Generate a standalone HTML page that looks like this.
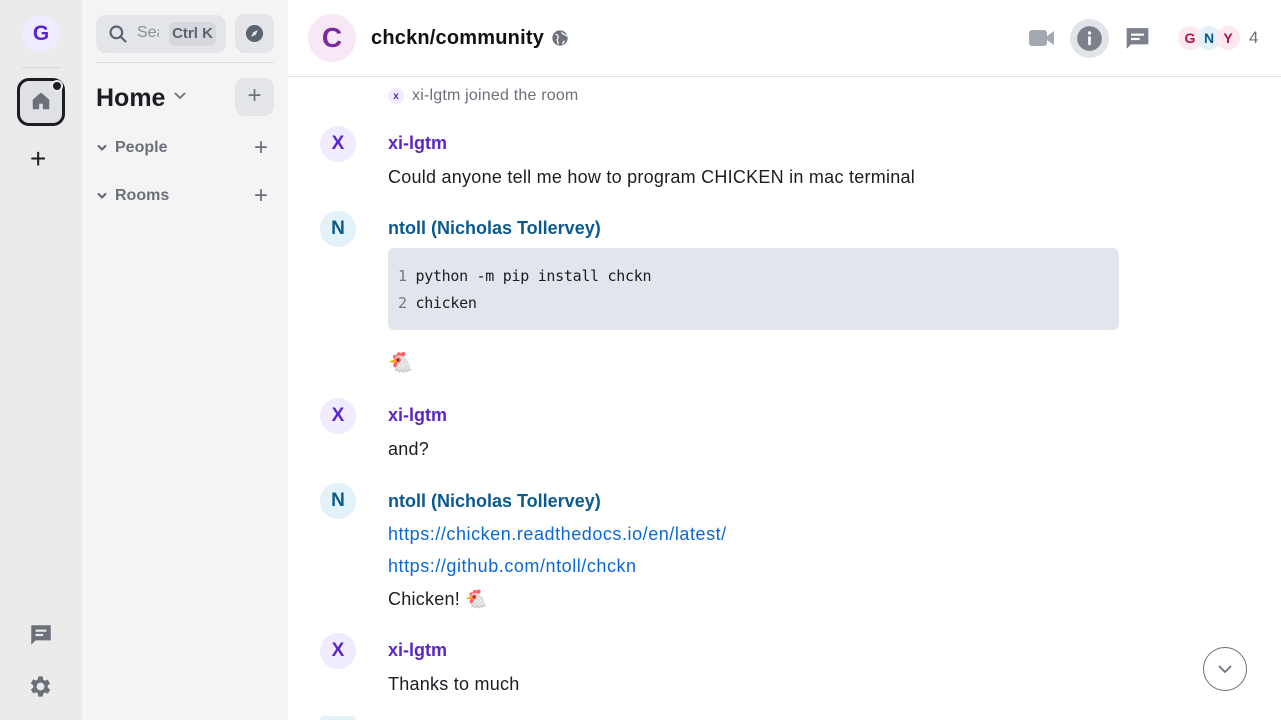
<!DOCTYPE html>
<html style="overflow:hidden;width:1281px;height:720px"><head><meta charset="utf-8"><style>
*{box-sizing:border-box;margin:0;padding:0}
body{width:1281px;height:720px;overflow:hidden;font-family:"Liberation Sans",sans-serif;background:#fff;position:relative;color:#1b1d22}
.abs{position:absolute}
.rail{left:0;top:0;width:82px;height:720px;background:#ebebeb}
.side{left:82px;top:0;width:206px;height:720px;background:#f4f4f4}
.av{position:absolute;border-radius:50%;display:flex;align-items:center;justify-content:center;font-weight:bold}
.name{position:absolute;left:388px;font-size:18px;font-weight:bold}
.msg{position:absolute;left:388px;font-size:18px;color:#1b1d22;letter-spacing:0.25px;white-space:nowrap}
.px{color:#5b26c8}.nx{color:#0b5a8f}
a{color:#0a68d6;text-decoration:none;letter-spacing:0.55px}
</style></head><body>
<div class="abs rail"></div>
<div class="abs side"></div>
<div class="av" style="left:22px;top:15px;width:38px;height:38px;background:#f0ebff;color:#5b26c8;font-size:21px">G</div>
<div class="abs" style="left:22px;top:67px;width:38px;height:1px;background:#d8d8dc"></div>
<div class="abs" style="left:17px;top:78px;width:48px;height:48px;border:3px solid #1b1d22;border-radius:12px;background:#e0e1e5"></div>
<svg class="abs" style="left:30px;top:90px" width="22" height="22" viewBox="0 0 24 24"><path d="M4 11 L12 4 L20 11 V20 H15 V14 H9 V20 H4Z" fill="#6b7079" stroke="#6b7079" stroke-linejoin="round" stroke-width="2"/></svg>
<div class="abs" style="left:51px;top:80px;width:12px;height:12px;border-radius:50%;background:#1b1d22;border:2px solid #ebebeb"></div>
<div class="abs" style="left:30px;top:145px;font-size:28px;line-height:28px;color:#1b1d22">+</div>
<svg class="abs" style="left:28px;top:622px" width="26" height="26" viewBox="0 0 24 24"><path d="M3 3h18v14H7l-4 4z" fill="#6b7079"/><rect x="7" y="7" width="10" height="2" fill="#ebebeb"/><rect x="7" y="11" width="7" height="2" fill="#ebebeb"/></svg>
<svg class="abs" style="left:27px;top:673px" width="27" height="27" viewBox="0 0 24 24"><path fill="#6b7079" d="M19.4 13a7.5 7.5 0 0 0 0-2l2.1-1.6-2-3.5-2.5 1a7 7 0 0 0-1.7-1L15 3h-4l-.4 2.7a7 7 0 0 0-1.700 1l-2.5-1-2 3.5L6.6 11a7.5 7.5 0 0 0 0 2l-2.1 1.6 2 3.5 2.5-1a7 7 0 0 0 1.7 1L11 21h4l.4-2.7a7 7 0 0 0 1.7-1l2.5 1 2-3.5zM13 15.5a3.5 3.5 0 1 1 0-7 3.5 3.5 0 0 1 0 7z" transform="translate(-1 0)"/></svg>

<div class="abs" style="left:96px;top:15px;width:130px;height:38px;background:#e4e5e9;border-radius:10px"></div>
<svg class="abs" style="left:108px;top:24px" width="20" height="20" viewBox="0 0 24 24"><circle cx="10" cy="10" r="7" fill="none" stroke="#5c6370" stroke-width="2.6"/><path d="M15 15l6 6" stroke="#5c6370" stroke-width="2.6" stroke-linecap="round"/></svg>
<div class="abs" style="left:137px;top:24px;font-size:16px;color:#8a8f98;width:22px;overflow:hidden;white-space:nowrap">Search</div>
<div class="abs" style="left:169px;top:22px;width:47px;height:24px;background:#d6d8dd;border-radius:6px;font-size:15px;color:#5c6370;text-align:center;line-height:24px;font-weight:bold">Ctrl K</div>
<div class="abs" style="left:235px;top:14px;width:39px;height:39px;background:#e4e5e9;border-radius:10px"></div>
<svg class="abs" style="left:245px;top:24px" width="19" height="19" viewBox="0 0 20 20"><circle cx="10" cy="10" r="9" fill="#5c6370"/><path d="M13.5 6.5 L11.3 11.3 L6.5 13.5 L8.7 8.7Z" fill="#e4e5e9"/></svg>
<div class="abs" style="left:96px;top:62px;width:178px;height:1px;background:#dbe0e6"></div>
<div class="abs" style="left:96px;top:84px;font-size:25px;font-weight:bold;color:#1b1d22">Home</div>
<svg class="abs" style="left:173px;top:91px" width="14" height="10" viewBox="0 0 14 10"><path d="M2 2l5 5 5-5" fill="none" stroke="#6b7079" stroke-width="1.8"/></svg>
<div class="abs" style="left:235px;top:78px;width:39px;height:38px;background:#e4e5e9;border-radius:10px;text-align:center;font-size:24px;line-height:36px;color:#6b7079">+</div>
<svg class="abs" style="left:96px;top:144px" width="12" height="8" viewBox="0 0 12 8"><path d="M2 1.5l4 4 4-4" fill="none" stroke="#5c6370" stroke-width="2"/></svg>
<div class="abs" style="left:115px;top:139px;font-size:16px;font-weight:bold;color:#6b7079">People</div>
<div class="abs" style="left:254px;top:134px;font-size:24px;color:#6b7079">+</div>
<svg class="abs" style="left:96px;top:192px" width="12" height="8" viewBox="0 0 12 8"><path d="M2 1.5l4 4 4-4" fill="none" stroke="#5c6370" stroke-width="2"/></svg>
<div class="abs" style="left:115px;top:187px;font-size:16px;font-weight:bold;color:#6b7079">Rooms</div>
<div class="abs" style="left:254px;top:182px;font-size:24px;color:#6b7079">+</div>

<div class="abs" style="left:288px;top:76px;width:993px;height:1px;background:#e0e3e8"></div>
<div class="av" style="left:308px;top:14px;width:48px;height:48px;background:#f7e8f6;color:#7b2a9c;font-size:28px">C</div>
<div class="abs" style="left:371px;top:27px;font-size:20px;font-weight:bold;color:#101114;letter-spacing:0.2px">chckn/community</div>
<svg class="abs" style="left:551px;top:29px" width="18" height="18" viewBox="0 0 20 20"><circle cx="10" cy="10" r="8.5" fill="#6b7079"/><path d="M5 6c2 0 3 1 3 3s-2 2-1 4 1 3 1 4M12 3c0 2 2 3 3 3s2 2 3 2M13 17c0-2 1-3 2-4" stroke="#fff" stroke-width="1.4" fill="none"/></svg>
<svg class="abs" style="left:1028px;top:27px" width="28" height="22" viewBox="0 0 28 22"><rect x="1" y="3" width="18" height="16" rx="3" fill="#a4a8b0"/><path d="M19 9l7-5v14l-7-5z" fill="#a4a8b0"/></svg>
<div class="abs" style="left:1070px;top:19px;width:39px;height:39px;border-radius:50%;background:#e1e5ea"></div>
<svg class="abs" style="left:1076px;top:25px" width="27" height="27" viewBox="0 0 24 24"><circle cx="12" cy="12" r="11" fill="#7b808a"/><circle cx="12" cy="7" r="1.5" fill="#fff"/><rect x="10.8" y="10" width="2.4" height="8" rx="1" fill="#fff"/></svg>
<svg class="abs" style="left:1124px;top:26px" width="27" height="26" viewBox="0 0 24 24"><path d="M2 2h20v15H6l-4 4z" fill="#7b808a"/><rect x="6" y="7" width="12" height="2" fill="#fff"/><rect x="6" y="11" width="8" height="2" fill="#fff"/></svg>
<div class="av" style="left:1178px;top:26px;width:24px;height:24px;background:#fde8ee;color:#b0124c;font-size:14px">G</div>
<div class="av" style="left:1197px;top:26px;width:24px;height:24px;background:#e2f2f8;color:#0b5a8f;font-size:14px">N</div>
<div class="av" style="left:1216px;top:26px;width:24px;height:24px;background:#fde8ee;color:#b0124c;font-size:14px">Y</div>
<div class="abs" style="left:1249px;top:28px;font-size:17px;color:#6b7079">4</div>

<div class="av" style="left:388px;top:88px;width:16px;height:16px;background:#f0ebff;color:#5b26c8;font-size:10px">x</div>
<div class="abs" style="left:412px;top:87px;font-size:16px;color:#6b7079;letter-spacing:0.2px">xi-lgtm joined the room</div>

<div class="av" style="left:320px;top:126px;width:36px;height:36px;background:#f0ebff;color:#5b26c8;font-size:19px">X</div>
<div class="name px" style="top:133px">xi-lgtm</div>
<div class="msg" style="top:167px">Could anyone tell me how to program CHICKEN in mac terminal</div>

<div class="av" style="left:320px;top:211px;width:36px;height:36px;background:#e2f2f8;color:#0b5a8f;font-size:19px">N</div>
<div class="name nx" style="top:218px">ntoll (Nicholas Tollervey)</div>
<div class="abs" style="left:388px;top:248px;width:731px;height:82px;background:#e1e5ec;border-radius:6px"></div>
<div class="abs" style="left:398px;top:263px;font-family:'DejaVu Sans Mono','Liberation Mono',monospace;font-size:15px;line-height:27px;color:#1b1d22;white-space:pre;letter-spacing:-0.3px"><span style="color:#777">1</span> python -m pip install chckn
<span style="color:#777">2</span> chicken</div>
<div class="abs" style="left:388px;top:350px;font-size:20px">🐔</div>

<div class="av" style="left:320px;top:398px;width:36px;height:36px;background:#f0ebff;color:#5b26c8;font-size:19px">X</div>
<div class="name px" style="top:405px">xi-lgtm</div>
<div class="msg" style="top:439px">and?</div>

<div class="av" style="left:320px;top:483px;width:36px;height:36px;background:#e2f2f8;color:#0b5a8f;font-size:19px">N</div>
<div class="name nx" style="top:491px">ntoll (Nicholas Tollervey)</div>
<div class="msg" style="top:524px"><a>https://chicken.readthedocs.io/en/latest/</a></div>
<div class="msg" style="top:556px"><a>https://github.com/ntoll/chckn</a></div>
<div class="msg" style="top:589px">Chicken! 🐔</div>

<div class="av" style="left:320px;top:633px;width:36px;height:36px;background:#f0ebff;color:#5b26c8;font-size:19px">X</div>
<div class="name px" style="top:640px">xi-lgtm</div>
<div class="msg" style="top:674px">Thanks to much</div>
<div class="abs" style="left:320px;top:716px;width:36px;height:4px;border-radius:18px 18px 0 0;background:#e2f2f8"></div>

<div class="abs" style="left:1203px;top:647px;width:44px;height:44px;border-radius:50%;border:1px solid #6b7079;background:#fff"></div>
<svg class="abs" style="left:1217px;top:663px" width="16" height="12" viewBox="0 0 16 12"><path d="M2 3l6 6 6-6" fill="none" stroke="#6b7079" stroke-width="1.8"/></svg>
</body></html>
